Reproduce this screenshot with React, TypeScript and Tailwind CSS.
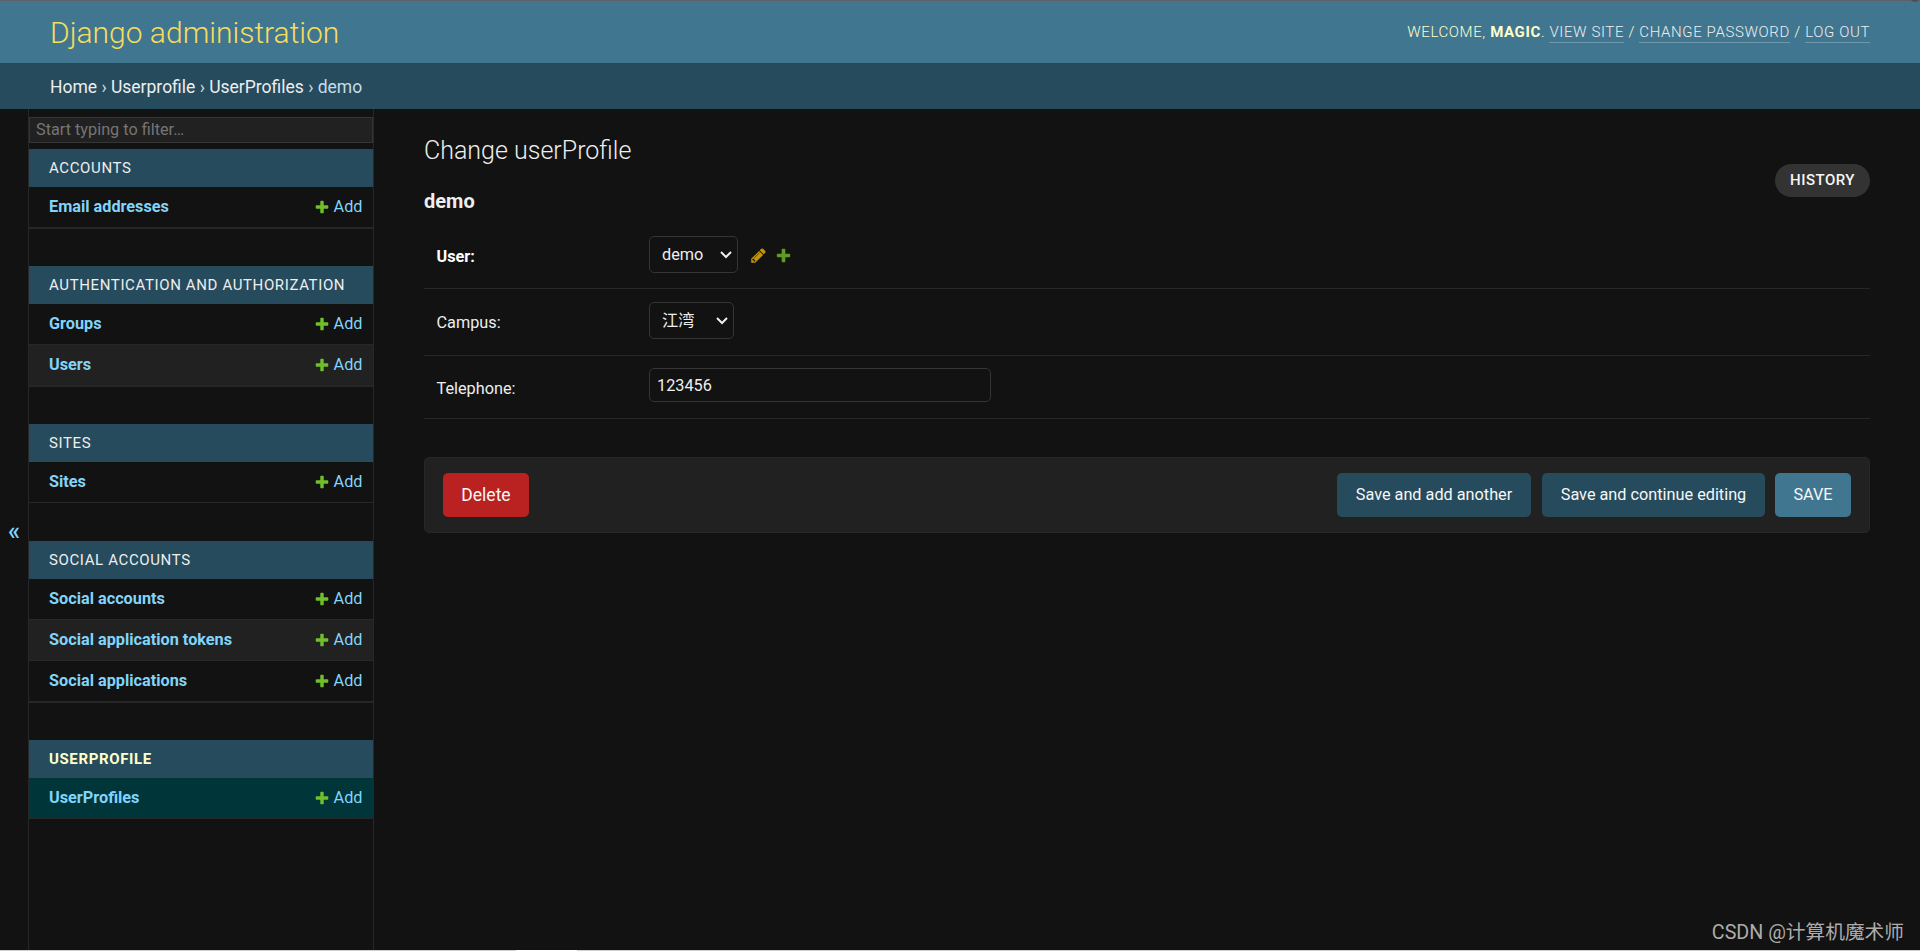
import type { ReactNode } from "react";
import clsx from "clsx";

type Model = { name: string; striped?: boolean; current?: boolean };

type AppSection = {
  caption: string;
  current?: boolean;
  gap: string;
  models: Model[];
};

const sections: AppSection[] = [
  {
    caption: "Accounts",
    gap: "mb-[37px] border-b",
    models: [{ name: "Email addresses" }],
  },
  {
    caption: "Authentication and Authorization",
    gap: "mb-[37px] border-b",
    models: [{ name: "Groups" }, { name: "Users", striped: true }],
  },
  {
    caption: "Sites",
    gap: "mb-[38px]",
    models: [{ name: "Sites" }],
  },
  {
    caption: "Social Accounts",
    gap: "mb-[37px] border-b",
    models: [
      { name: "Social accounts" },
      { name: "Social application tokens", striped: true },
      { name: "Social applications" },
    ],
  },
  {
    caption: "Userprofile",
    current: true,
    gap: "",
    models: [{ name: "UserProfiles", current: true }],
  },
];

const PlusIcon = ({ className }: { className?: string }) => (
  <svg viewBox="0 0 1792 1792" fill="#70bf2b" className={className}>
    <path d="M1600 796v192q0 40-28 68t-68 28h-416v416q0 40-28 68t-68 28h-192q-40 0-68-28t-28-68v-416h-416q-40 0-68-28t-28-68v-192q0-40 28-68t68-28h416v-416q0-40 28-68t68-28h192q40 0 68 28t28 68v416h416q40 0 68 28t28 68z" />
  </svg>
);

const PencilIcon = ({ className }: { className?: string }) => (
  <svg viewBox="0 0 1792 1792" fill="#efb80b" className={className}>
    <path d="M491 1536l91-91-235-235-91 91v107h128v128h107zm523-928q0-22-22-22-10 0-17 7l-542 542q-7 7-7 17 0 22 22 22 10 0 17-7l542-542q7-7 7-17zm-54-192l416 416-832 832h-416v-416zm683 96q0 53-37 90l-166 166-416-416 166-165q36-38 90-38 53 0 91 38l235 234q37 39 37 91z" />
  </svg>
);

const HeaderLink = ({ children }: { children: ReactNode }) => (
  <a href="#" className="border-b border-white/25 pb-px text-[#eeeeee]">
    {children}
  </a>
);

const Header = () => (
  <header className="flex h-[63px] items-center justify-between border-t border-[#5e6366] bg-[#417690] px-[50px] text-[#ffffcc]">
    <h1 className="pt-px text-[30px] leading-[38px] font-light text-[#f5dd5d]">
      Django administration
    </h1>
    <div className="text-[15px] leading-[20px] font-light tracking-[0.625px] uppercase">
      Welcome, <strong className="font-bold">magic</strong>.{" "}
      <HeaderLink>View site</HeaderLink> / <HeaderLink>Change password</HeaderLink>{" "}
      / <HeaderLink>Log out</HeaderLink>
    </div>
  </header>
);

const Breadcrumbs = () => (
  <div className="flex h-[46px] items-center gap-[4.3px] bg-[#264b5d] px-[50px] pt-[2px] text-[17.5px] leading-[22px] text-[#c4dce8]">
    <a href="#" className="text-[#eeeeee]">Home</a>
    <span>›</span>
    <a href="#" className="text-[#eeeeee]">Userprofile</a>
    <span>›</span>
    <a href="#" className="text-[#eeeeee]">UserProfiles</a>
    <span>›</span>
    <span>demo</span>
  </div>
);

const Sidebar = () => (
  <nav className="w-[346px] shrink-0 border-x border-[#272727] pt-2">
    <input
      placeholder="Start typing to filter…"
      className="mb-[6px] block h-[26px] w-full border border-[#353535] bg-[#212121] px-[6px] pb-px text-[16.25px] placeholder:text-[#757575]"
    />
    {sections.map((section) => (
      <section key={section.caption} className={clsx("border-[#272727]", section.gap)}>
        <h2
          className={clsx(
            "h-[38px] bg-[#264b5d] pl-5 text-[15px] leading-[38px] tracking-[0.625px] uppercase",
            section.current ? "font-bold text-[#ffffcc]" : "text-[#eeeeee]",
          )}
        >
          {section.caption}
        </h2>
        {section.models.map((model) => (
          <div
            key={model.name}
            className={clsx(
              "flex h-[41px] items-center justify-between border-b border-[#272727] pr-[10.5px] pl-5 text-[16.25px] leading-[20px] text-[#81d4fa]",
              model.striped && "bg-[#212121]",
              model.current && "bg-[#00363a]",
            )}
          >
            <a href="#" className="font-bold">{model.name}</a>
            <a href="#" className="flex items-center gap-[3.5px]">
              <PlusIcon className="size-4" />
              Add
            </a>
          </div>
        ))}
      </section>
    ))}
  </nav>
);

const Select = ({ value, className }: { value: string; className: string }) => (
  <div className={clsx("relative h-[37px]", className)}>
    <select className="size-full appearance-none rounded-[5px] border border-[#353535] bg-[#121212] pt-px pl-3 text-[16.25px] text-[#eeeeee]">
      <option>{value}</option>
    </select>
    <svg
      viewBox="0 0 12 8"
      fill="none"
      stroke="#eeeeee"
      strokeWidth="2"
      className="absolute top-[15px] right-[6px] h-2 w-3"
    >
      <path d="M1 1l5 5 5-5" />
    </svg>
  </div>
);

type FieldProps = { label: string; required?: boolean; className: string; children: ReactNode };

const Field = ({ label, required, className, children }: FieldProps) => (
  <div className={clsx("flex items-start border-b border-[#272727] pl-3", className)}>
    <label
      className={clsx(
        "mt-[11px] w-[213px] pl-[0.5px] text-[16.25px] leading-[20px]",
        required ? "font-bold text-white" : "text-[#eeeeee]",
      )}
    >
      {label}
    </label>
    {children}
  </div>
);

const Content = () => (
  <main className="grow pt-[26px] pr-[50px] pl-[50px]">
    <div className="flex justify-between">
      <div>
        <h1 className="text-[25px] leading-[31px] font-light text-[#eeeeee]">
          Change userProfile
        </h1>
        <h2 className="mt-[23px] text-[20px] leading-[24px] font-bold text-[#eeeeee]">
          demo
        </h2>
      </div>
      <a
        href="#"
        className="mt-[29px] h-[33px] w-[95px] rounded-full bg-[#333333] text-center text-[15px] leading-[32px] font-medium tracking-[0.5px] text-[#f7f7f7]"
      >
        HISTORY
      </a>
    </div>

    <form>
      <Field label="User:" required className="mt-[10px] h-[66px] pt-[13px]">
        <Select value="demo" className="w-[89px]" />
        <span className="mt-[11px] ml-[12px] flex gap-2 opacity-80">
          <PencilIcon className="size-[17px]" />
          <PlusIcon className="size-[17px]" />
        </span>
      </Field>
      <Field label="Campus:" className="h-[67px] pt-[13px]">
        <Select value="江湾" className="w-[85px]" />
      </Field>
      <Field label="Telephone:" className="h-[63px] pt-[12px]">
        <input
          defaultValue="123456"
          className="h-[34px] w-[342px] rounded-[5px] border border-[#353535] bg-[#121212] px-[7px] text-[16.25px] text-[#eeeeee]"
        />
      </Field>

      <div className="mt-[38px] flex h-[76px] items-center gap-[10px] rounded-[5px] border border-[#272727] bg-[#212121] px-[18px] text-[16.25px] text-[#f7f7f7]">
        <button className="mr-auto h-11 w-[86px] rounded-[5px] bg-[#ba2121] text-[17.5px]">
          Delete
        </button>
        <button className="mr-px h-11 w-[194px] rounded-[5px] bg-[#264b5d]">
          Save and add another
        </button>
        <button className="h-11 w-[223px] rounded-[5px] bg-[#264b5d]">
          Save and continue editing
        </button>
        <button className="h-11 w-[76px] rounded-[5px] bg-[#417690]">SAVE</button>
      </div>
    </form>
  </main>
);

export default function App() {
  return (
    <div className="relative flex h-[951px] flex-col overflow-hidden bg-[#121212] font-['Roboto','Noto_Sans_CJK_SC',sans-serif]">
      <Header />
      <Breadcrumbs />
      <div className="flex grow">
        <button className="w-7 shrink-0 pt-[5px] text-[25px] font-medium text-[#81d4fa]">«</button>
        <Sidebar />
        <Content />
      </div>
      <div className="h-px shrink-0 bg-[#d0d0d0] pl-[516px]">
        <div className="h-px w-[61px] bg-white" />
      </div>
      <div className="absolute -top-2 right-0 size-[10px] rounded-full bg-[#4b4f52]" />
      <p className="absolute right-[16px] bottom-[5px] text-[19.7px] leading-[26px] whitespace-nowrap text-[#acacac]">
        CSDN @计算机魔术师
      </p>
    </div>
  );
}
